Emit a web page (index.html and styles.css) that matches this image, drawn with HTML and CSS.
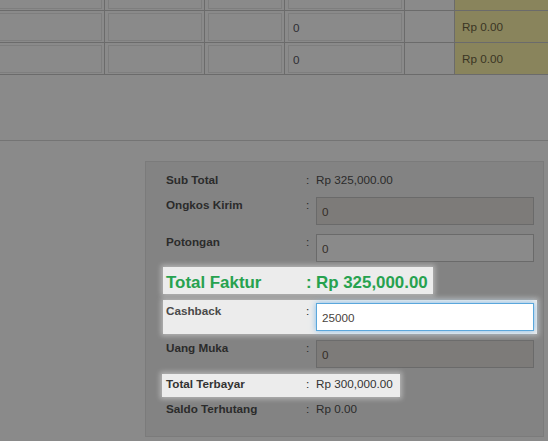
FILE: index.html
```html
<!DOCTYPE html>
<html lang="id">
<head>
    <meta charset="UTF-8">
    <meta name="viewport" content="width=device-width, initial-scale=1.0">
    <title>Faktur Pembelian</title>
    <link rel="stylesheet" href="styles.css">
</head>
<body>
    <div class="items">
        <div class="items-table">
            <div class="item-row">
                <div class="cell c1"><input class="cell-input" type="text"></div>
                <div class="cell c2"><input class="cell-input" type="text"></div>
                <div class="cell c3"><input class="cell-input" type="text"></div>
                <div class="cell c4"><input class="cell-input" type="text"></div>
                <div class="cell c5"></div>
                <div class="cell c6"></div>
            </div>
            <div class="item-row">
                <div class="cell c1"><input class="cell-input" type="text"></div>
                <div class="cell c2"><input class="cell-input" type="text"></div>
                <div class="cell c3"><input class="cell-input" type="text"></div>
                <div class="cell c4"><input class="cell-input" type="text" value="0"></div>
                <div class="cell c5"></div>
                <div class="cell c6">Rp 0.00</div>
            </div>
            <div class="item-row">
                <div class="cell c1"><input class="cell-input" type="text"></div>
                <div class="cell c2"><input class="cell-input" type="text"></div>
                <div class="cell c3"><input class="cell-input" type="text"></div>
                <div class="cell c4"><input class="cell-input" type="text" value="0"></div>
                <div class="cell c5"></div>
                <div class="cell c6">Rp 0.00</div>
            </div>
        </div>
    </div>

    <div class="summary-area">
        <div class="summary">
            <div class="srow">
                <span class="lbl">Sub Total</span><span class="colon">:</span><span class="val">Rp 325,000.00</span>
            </div>
            <div class="srow">
                <label class="lbl" for="ongkir">Ongkos Kirim</label><span class="colon">:</span>
                <input class="field readonly" id="ongkir" type="text" value="0" readonly>
            </div>
            <div class="srow">
                <label class="lbl" for="potongan">Potongan</label><span class="colon">:</span>
                <input class="field" id="potongan" type="text" value="0">
            </div>
            <div class="srow total hl">
                <span class="lbl">Total Faktur</span><span class="colon">:</span><span class="val">Rp 325,000.00</span>
            </div>
            <div class="srow cashback hl">
                <label class="lbl" for="cashback">Cashback</label><span class="colon">:</span>
                <input class="field focus" id="cashback" type="text" value="25000">
            </div>
            <div class="srow">
                <label class="lbl" for="dp">Uang Muka</label><span class="colon">:</span>
                <input class="field readonly" id="dp" type="text" value="0" readonly>
            </div>
            <div class="srow paid hl">
                <span class="lbl">Total Terbayar</span><span class="colon">:</span><span class="val">Rp 300,000.00</span>
            </div>
            <div class="srow">
                <span class="lbl">Saldo Terhutang</span><span class="colon">:</span><span class="val">Rp 0.00</span>
            </div>
        </div>
    </div>
</body>
</html>
```

FILE: styles.css
```css
* {
    box-sizing: border-box;
}
body {
    margin: 0;
    height: 441px;
    overflow: hidden;
    background-color: #8a8a8a;
    font-family: "Liberation Sans", Arial, sans-serif;
    font-size: 11.7px;
    color: #2b2b2b;
}
.items {
    height: 141px;
    border-bottom: 1px solid #747474;
    overflow: hidden;
}
.items-table {
    margin-top: -21px;
    margin-left: -50px;
    width: 598px;
}
.item-row {
    display: flex;
    height: 32px;
    border-bottom: 1px solid #6b6b6b;
}
.cell {
    border-right: 1px solid #6b6b6b;
    padding: 2px 2px 0 3px;
}
.c1 { width: 155px; }
.c2 { width: 100px; }
.c3 { width: 80px; }
.c4 { width: 120px; }
.c5 { width: 50px; }
.c6 {
    flex: 1;
    display: flex;
    align-items: center;
    padding: 0 0 0 7px;
    border-right: none;
    background-color: #89845c;
    color: #3a3524;
}
.cell-input {
    display: block;
    width: 100%;
    height: 28px;
    padding: 0 4px;
    border: 1px solid #7e7e7e;
    background: transparent;
    font: inherit;
    color: #2e2e33;
    outline: none;
}
.summary-area {
    padding: 20px 0 0 145px;
}
.summary {
    width: 399px;
    padding: 10px 9px 19px 20px;
    background-color: #838383;
    border: 1px solid #7b7b7b;
}
.srow {
    display: grid;
    grid-template-columns: 139px 11px 218px;
    line-height: 16px;
}
.srow + .srow {
    margin-top: 9px;
}
.lbl {
    font-weight: bold;
}
.colon {
    padding-left: 1px;
}
.field {
    width: 218px;
    height: 28px;
    padding: 0 5px;
    border: 1px solid #6a6a6a;
    background-color: #8a8a8a;
    font: inherit;
    color: #352e28;
    outline: none;
}
.field.readonly {
    background-color: #7d7b79;
}
.field.focus {
    background-color: #fff;
    border-color: #5aa7dc;
    box-shadow: 0 0 6px rgba(102, 175, 233, 0.8);
    color: #4a4440;
}
.srow.total {
    margin-top: 11px;
    grid-template-columns: 139px 11px auto;
    width: max-content;
    line-height: 20px;
    font-size: 16.9px;
    font-weight: bold;
    color: #27a24f;
}
.srow.cashback {
    margin-top: 10px;
}
.srow.paid {
    margin-top: 8px;
    grid-template-columns: 139px 11px auto;
    width: max-content;
}
/* highlight layer of the guided tour */
.hl {
    position: relative;
    z-index: 0;
}
.hl::before {
    content: "";
    position: absolute;
    z-index: -1;
    background-color: #ececec;
    box-shadow: 0 0 5px 2px rgba(255, 255, 255, 0.4);
}
.total.hl::before {
    inset: -6px -5px -1px -3px;
}
.cashback.hl::before {
    inset: -3px -3px -3px -3px;
}
.cashback .lbl {
    color: #4a4a4a;
}
.paid.hl::before {
    inset: -2px -7px -5px -4px;
}
.paid .lbl,
.paid .val {
    color: #333;
}
```
